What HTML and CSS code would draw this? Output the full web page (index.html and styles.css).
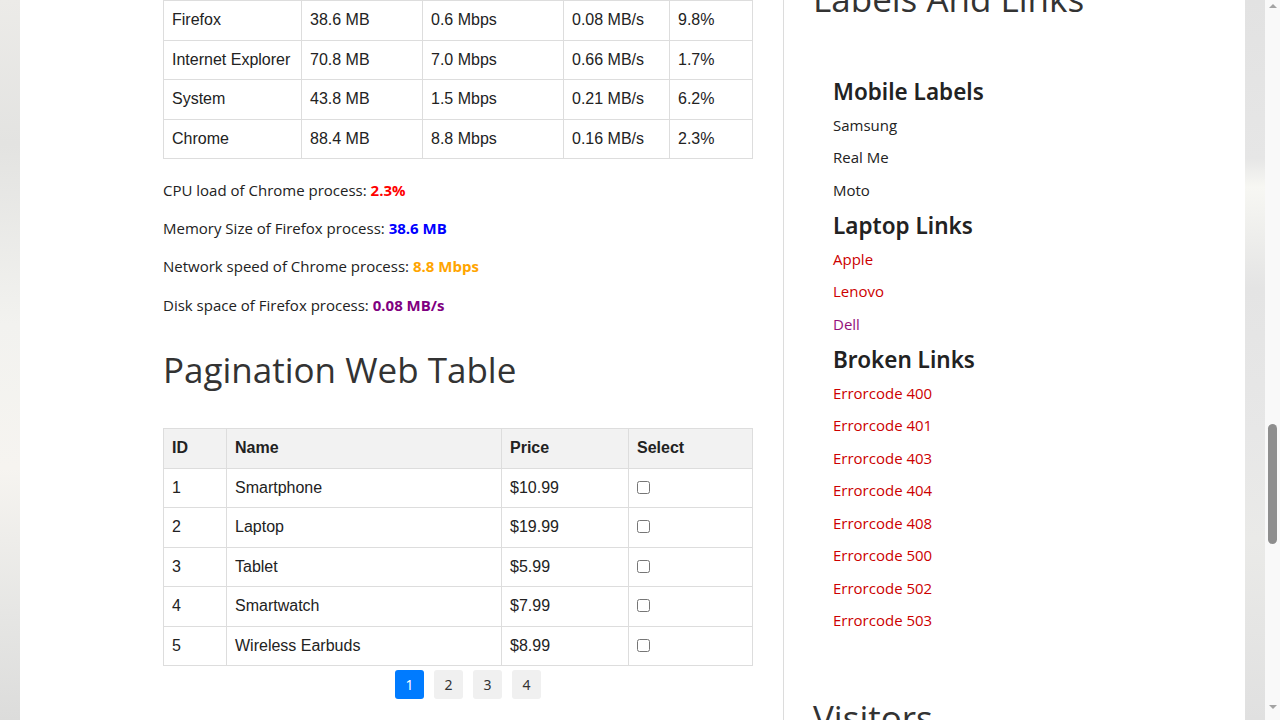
FILE: index.html
```html
<!DOCTYPE html>
<html lang="en">
<head>
<meta charset="utf-8">
<title>Web Tables</title>
<link rel="stylesheet" href="styles.css">
</head>
<body>
<div class="viewport">
  <div class="bg-edge bg-left"></div>
  <div class="page">
    <main class="main-col">
      <table class="data-table proc-table">
        <colgroup><col class="c1"><col class="c2"><col class="c3"><col class="c4"><col class="c5"></colgroup>
        <tbody>
          <tr><td>Firefox</td><td>38.6 MB</td><td>0.6 Mbps</td><td>0.08 MB/s</td><td>9.8%</td></tr>
          <tr><td>Internet Explorer</td><td>70.8 MB</td><td>7.0 Mbps</td><td>0.66 MB/s</td><td>1.7%</td></tr>
          <tr><td>System</td><td>43.8 MB</td><td>1.5 Mbps</td><td>0.21 MB/s</td><td>6.2%</td></tr>
          <tr><td>Chrome</td><td>88.4 MB</td><td>8.8 Mbps</td><td>0.16 MB/s</td><td>2.3%</td></tr>
        </tbody>
      </table>
      <p class="stat">CPU load of Chrome process: <strong class="v-red">2.3%</strong></p>
      <p class="stat">Memory Size of Firefox process: <strong class="v-blue">38.6 MB</strong></p>
      <p class="stat">Network speed of Chrome process: <strong class="v-orange">8.8 Mbps</strong></p>
      <p class="stat">Disk space of Firefox process: <strong class="v-purple">0.08 MB/s</strong></p>

      <h2 class="section-title pag-title">Pagination Web Table</h2>
      <table class="data-table pag-table">
        <colgroup><col class="p1"><col class="p2"><col class="p3"><col class="p4"></colgroup>
        <thead>
          <tr><th>ID</th><th>Name</th><th>Price</th><th>Select</th></tr>
        </thead>
        <tbody>
          <tr><td>1</td><td>Smartphone</td><td>$10.99</td><td><input type="checkbox"></td></tr>
          <tr><td>2</td><td>Laptop</td><td>$19.99</td><td><input type="checkbox"></td></tr>
          <tr><td>3</td><td>Tablet</td><td>$5.99</td><td><input type="checkbox"></td></tr>
          <tr><td>4</td><td>Smartwatch</td><td>$7.99</td><td><input type="checkbox"></td></tr>
          <tr><td>5</td><td>Wireless Earbuds</td><td>$8.99</td><td><input type="checkbox"></td></tr>
        </tbody>
      </table>
      <div class="pagination">
        <a class="page-btn active">1</a>
        <a class="page-btn">2</a>
        <a class="page-btn">3</a>
        <a class="page-btn">4</a>
      </div>
    </main>
    <aside class="side-col">
      <h2 class="section-title">Labels And Links</h2>
      <div class="link-group">
        <h3 class="group-title">Mobile Labels</h3>
        <div class="item">Samsung</div>
        <div class="item">Real Me</div>
        <div class="item">Moto</div>
        <h3 class="group-title">Laptop Links</h3>
        <a class="item link">Apple</a>
        <a class="item link">Lenovo</a>
        <a class="item link visited">Dell</a>
        <h3 class="group-title">Broken Links</h3>
        <a class="item link">Errorcode 400</a>
        <a class="item link">Errorcode 401</a>
        <a class="item link">Errorcode 403</a>
        <a class="item link">Errorcode 404</a>
        <a class="item link">Errorcode 408</a>
        <a class="item link">Errorcode 500</a>
        <a class="item link">Errorcode 502</a>
        <a class="item link">Errorcode 503</a>
      </div>
      <h2 class="section-title visitors">Visitors</h2>
    </aside>
  </div>
  <div class="bg-edge bg-right"></div>
  <div class="scrollbar">
    <div class="arrow arrow-up"></div>
    <div class="thumb"></div>
    <div class="arrow arrow-down"></div>
  </div>
</div>
</body>
</html>
```

FILE: styles.css
```css
html, body {
  margin: 0;
  padding: 0;
  height: 720px;
  overflow: hidden;
}
body {
  font-family: "Open Sans", "Noto Sans", sans-serif;
  color: #222;
  background: #fff;
}
.viewport {
  display: flex;
  width: 1280px;
  height: 720px;
  overflow: hidden;
}
.bg-edge {
  width: 20px;
  flex: none;
}
.bg-left {
  background: linear-gradient(180deg, #ecebe8 0%, #e3e3e1 20%, #f2f2ef 45%, #f6f4f0 65%, #e6e6e4 85%, #dcdcdb 100%);
}
.bg-right {
  background: linear-gradient(180deg, #e2e2e2 0%, #e6e6e6 22%, #f7f7f3 26%, #e4e4e4 40%, #e7e7e7 60%, #eaeae8 75%, #e0e0e0 100%);
}
.page {
  flex: none;
  width: 1225px;
  display: flex;
  background: #fff;
}
.main-col {
  width: 590px;
  padding-left: 143px;
  padding-right: 30px;
  border-right: 1px solid #dcdcdc;
  flex: none;
}
.side-col {
  flex: 1;
  padding-left: 29px;
  margin-top: -23px;
}

/* tables */
.data-table {
  border-collapse: collapse;
  font-family: "Liberation Sans", Arial, sans-serif;
  font-size: 16px;
  color: #222;
  width: 589px;
  table-layout: fixed;
}
.data-table td, .data-table th {
  border: 1px solid #dddddd;
  padding: 8px 8px;
  line-height: 22.5px;
  text-align: left;
  vertical-align: top;
}
.data-table th {
  background: #f2f2f2;
  font-weight: bold;
}
.proc-table { margin-bottom: 20px; }
.c1 { width: 138px; }
.c2 { width: 121px; }
.c3 { width: 141px; }
.c4 { width: 106px; }
.c5 { width: 83px; }
.p1 { width: 63px; }
.p2 { width: 275px; }
.p3 { width: 127px; }
.p4 { width: 124px; }
.data-table input[type="checkbox"] {
  margin: 4px 0 0 0;
  width: 13px;
  height: 13px;
  vertical-align: top;
}

/* stats */
.stat {
  margin: 0 0 15.7px;
  font-size: 15px;
  line-height: 22.5px;
  color: #222;
}
.stat strong { font-weight: 700; }
.v-red { color: #ff0000; }
.v-blue { color: #0000ff; }
.v-orange { color: #ffa500; }
.v-purple { color: #800080; }

.section-title {
  font-family: "Open Sans", "Noto Sans", sans-serif;
  font-weight: 400;
  font-size: 35px;
  line-height: 43px;
  color: #333;
  margin: 0;
}
.pag-title {
  margin: 32px 0 37px;
}
.pag-table { margin-bottom: 4px; }

.pagination {
  display: flex;
  gap: 10px;
  padding-left: 232px;
}
.page-btn {
  width: 29px;
  height: 29px;
  display: flex;
  align-items: center;
  justify-content: center;
  border-radius: 3px;
  background: #f0f0f0;
  color: #333;
  font-size: 14px;
  font-family: "Noto Sans", "Open Sans", sans-serif;
}
.page-btn.active {
  background: #007bff;
  color: #fff;
}

/* side column */
.link-group {
  padding-left: 20px;
  margin-top: 57px;
}
.group-title {
  font-family: "Noto Sans", "Open Sans", sans-serif;
  font-weight: 600;
  font-size: 22.5px;
  line-height: 29px;
  margin: 0 0 7.5px;
  color: #222;
}
.item {
  display: block;
  font-size: 15px;
  line-height: 22.5px;
  margin: 0 0 10px;
  color: #222;
  text-decoration: none;
}
.item.link { color: #cc0000; }
.item.link.visited { color: #93107a; }
.visitors {
  margin-top: 64px;
}

/* scrollbar */
.scrollbar {
  width: 15px;
  flex: none;
  background: #f9f9f9;
  display: flex;
  flex-direction: column;
  align-items: center;
}
.arrow {
  width: 0;
  height: 0;
  border-left: 4px solid transparent;
  border-right: 4px solid transparent;
}
.arrow-up {
  margin-top: 4px;
  border-bottom: 4px solid #a3a3a3;
}
.arrow-down {
  margin-top: 161px;
  border-top: 4px solid #a3a3a3;
}
.thumb {
  margin-top: 416px;
  width: 9px;
  height: 120px;
  border-radius: 5px;
  background: #8e8e8e;
}
```
